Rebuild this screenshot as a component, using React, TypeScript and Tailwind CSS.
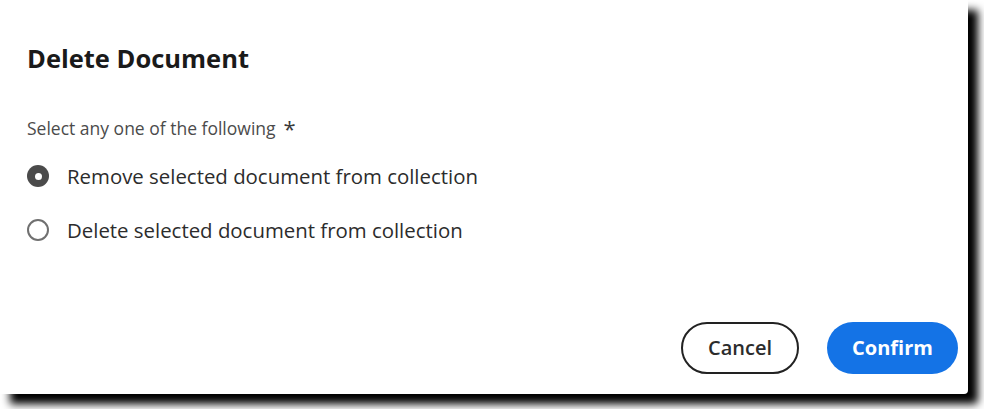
import React from "react";

export default function App() {
  return (
    <div className="w-[984px] h-[409px] bg-white overflow-hidden" style={{ fontFamily: '"Open Sans", "Liberation Sans", sans-serif' }}>
      <div className="w-[968px] h-[394px] bg-white rounded-br-[4px] shadow-[10px_10px_8px_#000] flex flex-col">
        <h1 className="pl-[27px] pt-[41px] text-[25.5px] leading-[34px] font-bold text-[#1a1a1a]">Delete Document</h1>
        <div className="pl-[27px] mt-[41px] text-[17.5px] leading-[24px] text-[#4b4b4b] flex items-center">
          <span>Select any one of the following</span>
          <span className="ml-[8px] text-[22px] leading-[24px] text-[#3a3a3a]">*</span>
        </div>
        <div className="pl-[27px] mt-[9px] flex flex-col">
          <label className="h-[54px] flex items-center">
            <span className="w-[22px] h-[22px] rounded-full bg-[#4b4b4b] flex items-center justify-center">
              <span className="w-[7px] h-[7px] rounded-full bg-white" />
            </span>
            <span className="ml-[18px] text-[20.4px] text-[#2c2c2c]">Remove selected document from collection</span>
          </label>
          <label className="h-[54px] flex items-center">
            <span className="w-[22px] h-[22px] rounded-full border-2 border-[#707070] bg-white" />
            <span className="ml-[18px] text-[20.4px] text-[#2c2c2c]">Delete selected document from collection</span>
          </label>
        </div>
        <div className="mt-auto mb-[20px] pr-[10px] flex justify-end items-center gap-[28px]">
          <button className="w-[118px] h-[52px] rounded-full border-2 border-[#222] text-[20px] font-semibold text-[#2c2c2c] bg-white">Cancel</button>
          <button className="w-[131px] h-[52px] rounded-full bg-[#1473e6] text-[20px] font-bold text-white">Confirm</button>
        </div>
      </div>
    </div>
  );
}
